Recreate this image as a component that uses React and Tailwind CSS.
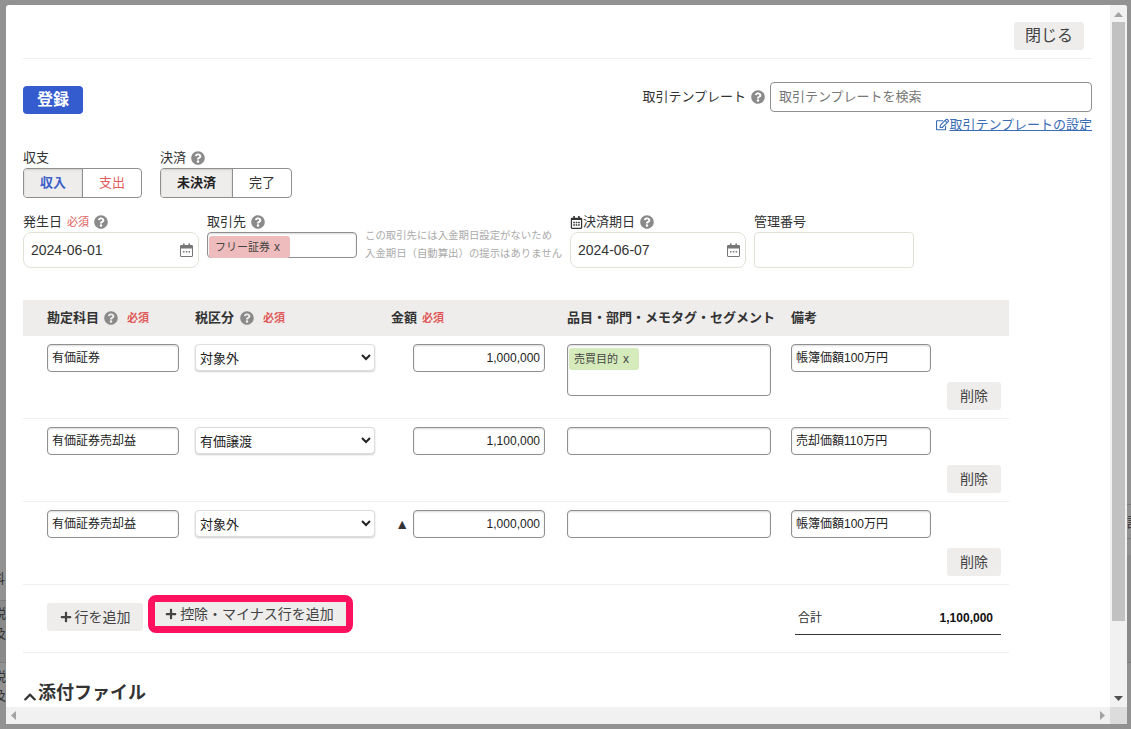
import React from 'react';
import { FaQuestionCircle, FaRegEdit, FaPlus, FaRegCalendarAlt, FaChevronUp } from 'react-icons/fa';

const font = { fontFamily: '"Liberation Sans","Noto Sans CJK JP",sans-serif' };

const Help = ({ className = '' }) => <FaQuestionCircle className={`inline-block text-[14px] text-[#8a8a8a] ${className}`} />;

const Required = ({ className = '' }) => <span className={`text-[11px] text-[#e05a5a] ${className}`}>必須</span>;

// chromeの日付ピッカーのアイコン
const DateIcon = () => (
  <svg width="13" height="14" viewBox="0 0 13 14" className="shrink-0">
    <path d="M1 2.5h11a.5.5 0 0 1 .5.5v10a.5.5 0 0 1-.5.5H1a.5.5 0 0 1-.5-.5V3a.5.5 0 0 1 .5-.5z" fill="none" stroke="#777" />
    <rect x="0.5" y="2.5" width="12" height="3" fill="#777" />
    <rect x="3" y="0.5" width="1.6" height="3" fill="#777" />
    <rect x="8.4" y="0.5" width="1.6" height="3" fill="#777" />
    <rect x="3" y="8" width="1.5" height="1.5" fill="#777" />
    <rect x="5.8" y="8" width="1.5" height="1.5" fill="#777" />
    <rect x="8.6" y="8" width="1.5" height="1.5" fill="#777" />
  </svg>
);

const DateField = ({ value }) => (
  <div className="w-[176px] h-[36px] border border-[#e3e0d8] rounded-[8px] flex items-center justify-between pl-[7px] pr-[5px] text-[14px] text-[#333]">
    <span>{value}</span>
    <DateIcon />
  </div>
);

const TextBox = ({ value, className = '' }) => (
  <div className={`h-[28px] border border-[#8f8f8f] rounded-[4px] shadow-[inset_0_1px_2px_rgba(0,0,0,0.15)] flex items-center px-[4px] text-[12px] text-[#222] ${className}`}>
    {value}
  </div>
);

const rows = [
  { account: '有価証券', tax: '対象外', amount: '1,000,000', tag: '売買目的', memo: '帳簿価額100万円' },
  { account: '有価証券売却益', tax: '有価譲渡', amount: '1,100,000', memo: '売却価額110万円' },
  { account: '有価証券売却益', tax: '対象外', amount: '1,000,000', minus: true, memo: '帳簿価額100万円' },
];

const Row = ({ row }) => (
  <div className="h-[83px] border-b border-[#eeeeee] grid grid-cols-[132px_180px_160px_208px_140px_54px] gap-x-[16px] pl-[24px] pt-[8px] items-start">
    <TextBox value={row.account} />
    <select defaultValue={row.tax} className="h-[27px] w-[180px] border border-[#dddddd] rounded-[4px] shadow-[0_1px_2px_rgba(0,0,0,0.2)] bg-white text-[13px] text-[#222] pt-[1px]">
      <option>{row.tax}</option>
    </select>
    <div className="flex items-center justify-end gap-[3px] mr-[6px] h-[28px]">
      {row.minus && <span className="text-[14px] text-[#333] mr-[1px]">▲</span>}
      <TextBox value={row.amount} className="w-[132px] justify-end" />
    </div>
    <div className={`w-[204px] border border-[#8f8f8f] rounded-[4px] shadow-[inset_0_1px_2px_rgba(0,0,0,0.15)] ${row.tag ? 'h-[52px] p-[1px]' : 'h-[28px]'}`}>
      {row.tag && (
        <span className="inline-flex items-center h-[22px] pl-[5px] pr-[10px] rounded-[3px] bg-[#d5ebbb] text-[11px] text-[#444]">
          {row.tag}<span className="ml-[5px] text-[12px]">x</span>
        </span>
      )}
    </div>
    <TextBox value={row.memo} />
    <div className="h-[66px] flex items-end">
      <button className="w-[54px] h-[28px] rounded-[3px] bg-[#eeedec] text-[14px] text-[#444]">削除</button>
    </div>
  </div>
);

const Segment = ({ left, right, leftColor, rightColor, leftW }) => (
  <div className={`flex h-[30px] border border-[#8f8f8f] rounded-[4px] overflow-hidden text-[13px] ${leftW}`}>
    <div className={`flex-1 flex items-center justify-center bg-[#eeedec] font-bold shadow-[inset_0_1px_2px_rgba(0,0,0,0.15)] border-r border-[#8f8f8f] ${leftColor}`}>{left}</div>
    <div className={`w-[58px] flex items-center justify-center ${rightColor}`}>{right}</div>
  </div>
);

export default function App() {
  return (
    <div style={font} className="relative w-[1131px] h-[729px] overflow-hidden bg-[#929292] pt-[5px] pb-[5px] pl-[6px] pr-[4px]">
      {/* モーダルの後ろの画面（オーバーレイ越しに端だけ見える） */}
      <div className="absolute left-0 top-[600px] w-[6px] h-[63px] bg-[#8a8a8a] border-t border-b border-[#7c7c7c]" />
      <div className="absolute right-0 top-[504px] w-[4px] h-[35px] border-t border-b border-[#7c7c7c]" />
      <div className="absolute right-0 top-[555px] w-[4px] h-[108px] bg-[#8a8a8a] border-b border-[#7c7c7c]" />
      <span className="absolute left-[-8px] top-[569px] text-[13px] text-[#333]">科</span>
      <span className="absolute left-[-7px] top-[604px] text-[13px] text-[#333]">税</span>
      <span className="absolute left-[-7px] top-[624px] text-[13px] text-[#333]">及</span>
      <span className="absolute left-[-7px] top-[667px] text-[13px] text-[#333]">税</span>
      <span className="absolute left-[-7px] top-[686px] text-[13px] text-[#333]">及</span>
      <span className="absolute left-[1127px] top-[513px] text-[13px] text-[#333]">計</span>

      <div className="relative w-full h-full bg-white rounded-t-[3px] overflow-hidden flex flex-col">
        <div className="flex-1 flex min-h-0">
          <div className="flex-1 min-w-0 overflow-hidden pl-[17px] pr-[18px] pt-[17px] text-[#333]">
            {/* 閉じる */}
            <div className="h-[37px] border-b border-[#eeeeee] flex justify-end pr-[8px]">
              <button className="w-[70px] h-[28px] rounded-[3px] bg-[#eeedec] text-[16px] text-[#444]">閉じる</button>
            </div>

            {/* 登録・テンプレート */}
            <div className="flex justify-between items-start mt-[23px]">
              <button className="mt-[4px] w-[60px] h-[28px] rounded-[4px] bg-[#345cce] text-white font-bold text-[16px]">登録</button>
              <div className="flex flex-col items-end">
                <div className="flex items-center">
                  <span className="text-[13px]">取引テンプレート</span>
                  <Help className="ml-[5px] mr-[5px]" />
                  <div className="w-[322px] h-[30px] border border-[#8f8f8f] rounded-[4px] flex items-center px-[8px] text-[13px] text-[#777]">取引テンプレートを検索</div>
                </div>
                <a className="mt-[4px] text-[13px] leading-[17px] text-[#3a6db5] underline flex items-center">
                  <FaRegEdit className="text-[13px]" />取引テンプレートの設定
                </a>
              </div>
            </div>

            {/* 収支・決済 */}
            <div className="flex gap-[18px] mt-[17px]">
              <div>
                <div className="text-[13px] leading-[16px] h-[18px]">収支</div>
                <Segment left="収入" right="支出" leftColor="text-[#3c5fc9]" rightColor="text-[#e25c5c]" leftW="w-[119px]" />
              </div>
              <div>
                <div className="text-[13px] leading-[16px] h-[18px] pb-[2px] flex items-center">決済<Help className="ml-[5px]" /></div>
                <Segment left="未決済" right="完了" leftColor="text-[#222]" rightColor="text-[#333]" leftW="w-[132px]" />
              </div>
            </div>

            {/* 日付など */}
            <div className="flex mt-[16px] items-start">
              <div className="w-[184px]">
                <div className="h-[18px] text-[13px] leading-[16px] pb-[2px] flex items-center">発生日<Required className="ml-[5px]" /><Help className="ml-[5px]" /></div>
                <DateField value="2024-06-01" />
              </div>
              <div className="w-[158px]">
                <div className="h-[18px] text-[13px] leading-[16px] pb-[2px] flex items-center">取引先<Help className="ml-[5px]" /></div>
                <div className="w-[150px] h-[26px] border border-[#8f8f8f] rounded-[4px] p-[1px] shadow-[inset_0_1px_2px_rgba(0,0,0,0.15)]">
                  <span className="inline-flex items-center h-[22px] pl-[6px] pr-[10px] rounded-[3px] bg-[#eebcbc] text-[11px] text-[#444]">フリー証券<span className="ml-[4px] text-[12px]">x</span></span>
                </div>
              </div>
              <div className="w-[205px] pt-[13px] text-[10.4px] leading-[18px] text-[#aaaaaa] whitespace-nowrap">
                <div>この取引先には入金期日設定がないため</div>
                <div>入金期日（自動算出）の提示はありません</div>
              </div>
              <div className="w-[184px]">
                <div className="h-[18px] text-[13px] leading-[16px] pb-[2px] flex items-center"><FaRegCalendarAlt className="text-[13px]" />決済期日<Help className="ml-[5px]" /></div>
                <DateField value="2024-06-07" />
              </div>
              <div>
                <div className="h-[18px] text-[13px] leading-[16px]">管理番号</div>
                <div className="w-[160px] h-[36px] border border-[#e3e0d8] rounded-[4px]" />
              </div>
            </div>

            {/* 明細 */}
            <div className="w-[986px] mt-[32px]">
              <div className="h-[36px] bg-[#eeedec] grid grid-cols-[148px_196px_176px_224px_1fr] pl-[24px] items-center text-[13px] font-bold">
                <div className="flex items-center">勘定科目<Help className="ml-[5px]" /><Required className="ml-[9px]" /></div>
                <div className="flex items-center">税区分<Help className="ml-[6px]" /><Required className="ml-[9px]" /></div>
                <div className="flex items-center">金額<Required className="ml-[5px]" /></div>
                <div className="whitespace-nowrap">品目・部門・メモタグ・セグメント</div>
                <div>備考</div>
              </div>
              {rows.map((row, i) => <Row key={i} row={row} />)}

              <div className="h-[68px] border-b border-[#eeeeee] flex items-start pl-[24px] pt-[10px]">
                <div className="flex items-center">
                  <button className="w-[96px] h-[28px] mt-[6px] rounded-[3px] bg-[#eeedec] text-[14px] text-[#444] flex items-center justify-center gap-[3px]">
                    <FaPlus className="text-[12px]" />行を追加
                  </button>
                  <div className="ml-[5px] border-[7px] border-[#ff1160] rounded-[8px]">
                    <button className="w-[191px] h-[24px] bg-[#eeedec] text-[14px] text-[#444] flex items-center justify-center gap-[3px] pr-[2px]">
                      <FaPlus className="text-[12px]" />控除・マイナス行を追加
                    </button>
                  </div>
                </div>
                <div className="ml-auto mr-[8px] mt-[6px] w-[206px] h-[34px] border-b border-[#333] flex items-center justify-between px-[3px] pr-[8px]">
                  <span className="text-[12px] text-[#333]">合計</span>
                  <span className="text-[12px] font-bold text-[#111]">1,100,000</span>
                </div>
              </div>
            </div>

            {/* 添付ファイル */}
            <div className="flex items-center mt-[28px] text-[18px] font-bold leading-[24px]">
              <FaChevronUp className="text-[14px] mr-[1px] mt-[7px]" />添付ファイル
            </div>
          </div>

          {/* 縦スクロールバー */}
          <div className="w-[17px] bg-[#f1f1f1] flex flex-col items-center">
            <svg width="9" height="5" viewBox="0 0 9 5" className="mt-[7px] mb-[5px]"><path d="M4.5 0L9 5H0z" fill="#a3a3a3" /></svg>
            <div className="w-[13px] h-[599px] bg-[#c1c1c1]" />
            <svg width="9" height="5" viewBox="0 0 9 5" className="mt-auto mb-[6px]"><path d="M4.5 5L0 0h9z" fill="#505050" /></svg>
          </div>
        </div>

        {/* 横スクロールバー */}
        <div className="h-[17px] shrink-0 flex">
          <div className="flex-1 bg-[#f1f1f1] flex items-center justify-between px-[5px]">
            <svg width="5" height="9" viewBox="0 0 5 9"><path d="M0 4.5L5 0v9z" fill="#a3a3a3" /></svg>
            <svg width="5" height="9" viewBox="0 0 5 9"><path d="M5 4.5L0 0v9z" fill="#a3a3a3" /></svg>
          </div>
          <div className="w-[17px] bg-[#dcdcdc]" />
        </div>
      </div>
    </div>
  );
}
